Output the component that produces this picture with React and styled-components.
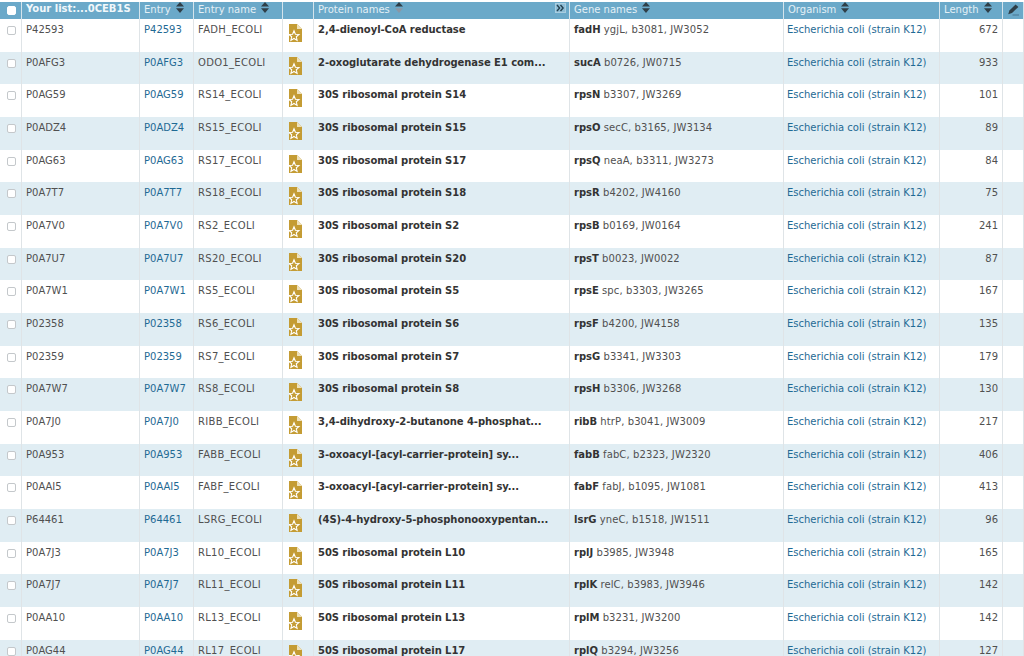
import React from "react";
import styled, { createGlobalStyle } from "styled-components";

const ORG = "Escherichia coli (strain K12)";

const rows = [
  ["P42593", "FADH_ECOLI", "2,4-dienoyl-CoA reductase", "fadH", "ygjL, b3081, JW3052", 672],
  ["P0AFG3", "ODO1_ECOLI", "2-oxoglutarate dehydrogenase E1 com...", "sucA", "b0726, JW0715", 933],
  ["P0AG59", "RS14_ECOLI", "30S ribosomal protein S14", "rpsN", "b3307, JW3269", 101],
  ["P0ADZ4", "RS15_ECOLI", "30S ribosomal protein S15", "rpsO", "secC, b3165, JW3134", 89],
  ["P0AG63", "RS17_ECOLI", "30S ribosomal protein S17", "rpsQ", "neaA, b3311, JW3273", 84],
  ["P0A7T7", "RS18_ECOLI", "30S ribosomal protein S18", "rpsR", "b4202, JW4160", 75],
  ["P0A7V0", "RS2_ECOLI", "30S ribosomal protein S2", "rpsB", "b0169, JW0164", 241],
  ["P0A7U7", "RS20_ECOLI", "30S ribosomal protein S20", "rpsT", "b0023, JW0022", 87],
  ["P0A7W1", "RS5_ECOLI", "30S ribosomal protein S5", "rpsE", "spc, b3303, JW3265", 167],
  ["P02358", "RS6_ECOLI", "30S ribosomal protein S6", "rpsF", "b4200, JW4158", 135],
  ["P02359", "RS7_ECOLI", "30S ribosomal protein S7", "rpsG", "b3341, JW3303", 179],
  ["P0A7W7", "RS8_ECOLI", "30S ribosomal protein S8", "rpsH", "b3306, JW3268", 130],
  ["P0A7J0", "RIBB_ECOLI", "3,4-dihydroxy-2-butanone 4-phosphat...", "ribB", "htrP, b3041, JW3009", 217],
  ["P0A953", "FABB_ECOLI", "3-oxoacyl-[acyl-carrier-protein] sy...", "fabB", "fabC, b2323, JW2320", 406],
  ["P0AAI5", "FABF_ECOLI", "3-oxoacyl-[acyl-carrier-protein] sy...", "fabF", "fabJ, b1095, JW1081", 413],
  ["P64461", "LSRG_ECOLI", "(4S)-4-hydroxy-5-phosphonooxypentan...", "lsrG", "yneC, b1518, JW1511", 96],
  ["P0A7J3", "RL10_ECOLI", "50S ribosomal protein L10", "rplJ", "b3985, JW3948", 165],
  ["P0A7J7", "RL11_ECOLI", "50S ribosomal protein L11", "rplK", "relC, b3983, JW3946", 142],
  ["P0AA10", "RL13_ECOLI", "50S ribosomal protein L13", "rplM", "b3231, JW3200", 142],
  ["P0AG44", "RL17_ECOLI", "50S ribosomal protein L17", "rplQ", "b3294, JW3256", 127],
];

const GlobalStyle = createGlobalStyle`
  html, body {
    margin: 0;
    height: 100%;
    overflow: hidden;
    background: #fff;
  }
  body {
    font-family: "DejaVu Sans", Verdana, sans-serif;
    font-size: 10px;
    color: #444;
  }
`;

const Page = styled.div`
  padding-top: 2px;
  height: 654px;
  overflow: hidden;
`;

const Table = styled.table`
  width: 1024px;
  table-layout: fixed;
  border-collapse: separate;
  border-spacing: 0;
`;

const HeadCell = styled.th`
  height: 17px;
  box-sizing: border-box;
  padding: 0 0 3px ${(p) => (p.$flush ? 0 : "4px")};
  background: #6ba9c9;
  border-right: 1px solid #d5e4ec;
  color: #e4f0f6;
  font-weight: normal;
  font-size: 10px;
  text-align: left;
  white-space: nowrap;
  position: relative;
  vertical-align: middle;
  line-height: 12px;
`;

const ListTitle = styled.span`
  color: #f2f8fb;
  font-weight: bold;
`;

const Row = styled.tr`
  background: ${(p) => (p.$alt ? "#e0edf3" : "#fff")};
`;

const Cell = styled.td`
  height: 32.68px;
  box-sizing: border-box;
  padding: ${(p) => (p.$flush ? 0 : "4px 4px 0")};
  border-right: 1px solid #dfe4e7;
  vertical-align: top;
  white-space: nowrap;
  overflow: hidden;
  line-height: 13px;
  text-align: ${(p) => (p.$right ? "right" : "left")};
  color: #505050;
`;

const LinkText = styled.a`
  color: #1f6a94;
`;

const EntryName = styled.span`
  letter-spacing: 0.3px;
`;

const Protein = styled.strong`
  color: #333;
  letter-spacing: -0.06px;
`;

const GeneMain = styled.strong`
  color: #333;
`;

const GeneRest = styled.span`
  letter-spacing: 0.1px;
`;

const Box = styled.span`
  display: block;
  box-sizing: border-box;
  width: 9px;
  height: 9px;
  margin: 7px 0 0 7px;
  border: 1px solid #c4c8cb;
  border-radius: 2px;
  background: #fff;
`;

const HeadBox = styled(Box)`
  margin: 3px 0 0 7px;
  border: 1px solid #fff;
`;

const IconCell = styled(Cell)`
  padding: 5px 0 0 6px;
`;

const OrganismCell = styled(Cell)`
  padding-left: 3px;
`;

const SortWrap = styled.svg`
  display: inline-block;
  width: 8px;
  height: 11px;
  margin-left: 5px;
  vertical-align: 0;
`;

const Collapse = styled.svg`
  position: absolute;
  right: 3px;
  top: 1px;
  width: 11px;
  height: 10px;
`;

const PencilIcon = styled.svg`
  display: block;
  width: 12px;
  height: 12px;
  margin-top: 1px;
`;

function Sort({ active }) {
  return (
    <SortWrap viewBox="0 0 8 11">
      <path d="M4 0 8 4.4H0Z" fill="#2f3f48" />
      <path d="M0 6.2H8L4 11Z" fill={active ? "#8b97a5" : "#2f3f48"} />
    </SortWrap>
  );
}

function ReviewedIcon() {
  return (
    <svg width="13" height="18" viewBox="0 0 13 18" style={{ display: "block" }}>
      <path d="M0 0H8L13 5V18H0Z" fill="#c49c34" />
      <path d="M8 0 13 5H8Z" fill="#efe2bb" />
      <path
        d="M5 6.8 6.4 10.2 10 10.5 7.3 12.8 8.1 16.4 5 14.5 1.9 16.4 2.7 12.8 0 10.5 3.6 10.2Z"
        fill="#c49c34"
        stroke="#fff"
        strokeWidth="1.1"
      />
    </svg>
  );
}

export default function App() {
  return (
    <Page>
      <GlobalStyle />
      <Table>
        <colgroup>
          <col style={{ width: 22 }} />
          <col style={{ width: 118 }} />
          <col style={{ width: 54 }} />
          <col style={{ width: 89 }} />
          <col style={{ width: 31 }} />
          <col style={{ width: 256 }} />
          <col style={{ width: 214 }} />
          <col style={{ width: 156 }} />
          <col style={{ width: 63 }} />
          <col style={{ width: 21 }} />
        </colgroup>
        <thead>
          <tr>
            <HeadCell $flush>
              <HeadBox />
            </HeadCell>
            <HeadCell>
              <ListTitle>Your list:...0CEB1S</ListTitle>
            </HeadCell>
            <HeadCell>
              Entry
              <Sort />
            </HeadCell>
            <HeadCell>
              Entry name
              <Sort />
            </HeadCell>
            <HeadCell />
            <HeadCell>
              Protein names
              <Sort active />
              <Collapse viewBox="0 0 11 10">
                <rect x="0.5" y="0.5" width="10" height="9" fill="#8dbcd5" stroke="#a9cde0" />
                <path d="M2 2 4.6 5 2 8M5.5 2 8.1 5 5.5 8" fill="none" stroke="#24404f" strokeWidth="1.4" />
              </Collapse>
            </HeadCell>
            <HeadCell>
              Gene names
              <Sort />
            </HeadCell>
            <HeadCell>
              Organism
              <Sort />
            </HeadCell>
            <HeadCell>
              Length
              <Sort />
            </HeadCell>
            <HeadCell>
              <PencilIcon viewBox="0 0 12 12">
                <path d="M8.6 0.4 11.4 3 5 9 1.2 10.2 2.4 6.4Z" fill="#2f3f48" />
                <path d="M5.5 11H12" stroke="#4d7f9b" strokeWidth="1.2" />
              </PencilIcon>
            </HeadCell>
          </tr>
        </thead>
        <tbody>
          {rows.map((r, i) => (
            <Row key={r[0] + i} $alt={i % 2 === 1}>
              <Cell $flush>
                <Box />
              </Cell>
              <Cell>{r[0]}</Cell>
              <Cell>
                <LinkText>{r[0]}</LinkText>
              </Cell>
              <Cell>
                <EntryName>{r[1]}</EntryName>
              </Cell>
              <IconCell>
                <ReviewedIcon />
              </IconCell>
              <Cell>
                <Protein>{r[2]}</Protein>
              </Cell>
              <Cell>
                <GeneMain>{r[3]}</GeneMain> <GeneRest>{r[4]}</GeneRest>
              </Cell>
              <OrganismCell>
                <LinkText>{ORG}</LinkText>
              </OrganismCell>
              <Cell $right>{r[5]}</Cell>
              <Cell />
            </Row>
          ))}
        </tbody>
      </Table>
    </Page>
  );
}
